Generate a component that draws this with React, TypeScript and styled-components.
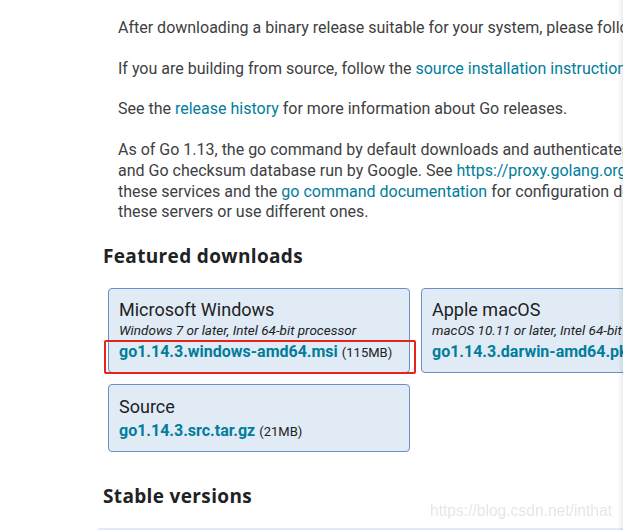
import React from "react";
import styled, { createGlobalStyle } from "styled-components";

const GlobalStyle = createGlobalStyle`
  html, body {
    margin: 0;
    padding: 0;
    background: #fff;
    overflow: hidden;
    height: 530px;
  }
  body {
    font-family: Roboto, "Liberation Sans", Arial, sans-serif;
    color: #3e4042;
  }
`;

const Page = styled.main`
  padding: 18px 0 0 103px;
  width: 900px;
`;

const Para = styled.p`
  margin: 0 0 20px 15px;
  font-size: 16px;
  line-height: 20.7px;
  white-space: nowrap;
`;

const Link = styled.a`
  color: #007d9c;
  text-decoration: none;
`;

const Heading = styled.h2<{ $top?: number }>`
  margin: ${({ $top }) => $top ?? 0}px 0 0 0;
  font-family: "Open Sans", "DejaVu Sans", sans-serif;
  font-weight: 700;
  font-size: 19px;
  line-height: 24px;
  color: #202224;
  letter-spacing: 0.35px;
`;

const CardGrid = styled.div`
  position: relative;
  margin: 20px 0 0 5px;
  display: grid;
  grid-template-columns: 302px 302px;
  column-gap: 11px;
  row-gap: 11px;
  align-items: start;
`;

const Card = styled.div<{ $padTop?: number }>`
  background: #e0ebf5;
  border: 1px solid #6b8fc4;
  border-radius: 4px;
  padding: ${({ $padTop }) => $padTop ?? 10}px 10px 8px 10px;
  white-space: nowrap;
  overflow: hidden;
`;

const CardTitle = styled.div`
  font-size: 18px;
  line-height: 22px;
  color: #202224;
`;

const CardSub = styled.div`
  font-size: 13.5px;
  line-height: 17px;
  font-style: italic;
  color: #202224;
  margin-top: 1px;
`;

const FileRow = styled.div<{ $top?: number }>`
  font-size: 13px;
  line-height: 22px;
  color: #202224;
  margin-top: ${({ $top }) => $top ?? 0}px;
`;

const FileLink = styled(Link)`
  font-size: 16px;
  font-weight: 700;
  margin-right: 4px;
`;

const Highlight = styled.div`
  position: absolute;
  left: -4px;
  top: 52px;
  width: 308px;
  height: 30px;
  border: 2px solid #e5241b;
  border-radius: 2px;
  pointer-events: none;
`;

const TableStart = styled.div`
  margin: 20px 0 0 -5px;
  height: 30px;
  background: #e0ebf5;
`;

const Watermark = styled.div`
  position: fixed;
  left: 430px;
  top: 502px;
  font-family: "Liberation Sans", Arial, sans-serif;
  font-size: 15.6px;
  color: rgba(222, 222, 222, 0.75);
`;

const EdgeShade = styled.div`
  position: fixed;
  top: 0;
  right: 0;
  width: 5px;
  height: 530px;
  background: linear-gradient(to right, rgba(0, 0, 0, 0), rgba(0, 0, 0, 0.07));
`;

export default function App() {
  return (
    <>
      <GlobalStyle />
      <Page>
        <Para>
          After downloading a binary release suitable for your system, please follow the{" "}
          <Link href="#">installation instructions</Link>.
        </Para>
        <Para>
          If you are building from source, follow the{" "}
          <Link href="#">source installation instructions</Link>.
        </Para>
        <Para>
          See the <Link href="#">release history</Link> for more information about Go releases.
        </Para>
        <Para>
          As of Go 1.13, the go command by default downloads and authenticates modules using the Go module mirror
          <br />
          and Go checksum database run by Google. See{" "}
          <Link href="#">https://proxy.golang.org/privacy</Link> for privacy information about
          <br />
          these services and the <Link href="#">go command documentation</Link> for configuration details including how to disable the use of
          <br />
          these servers or use different ones.
        </Para>

        <Heading $top={21}>Featured downloads</Heading>

        <CardGrid>
          <Card>
            <CardTitle>Microsoft Windows</CardTitle>
            <CardSub>Windows 7 or later, Intel 64-bit processor</CardSub>
            <FileRow $top={2}>
              <FileLink href="#">go1.14.3.windows-amd64.msi</FileLink>(115MB)
            </FileRow>
          </Card>
          <Card>
            <CardTitle>Apple macOS</CardTitle>
            <CardSub>macOS 10.11 or later, Intel 64-bit processor</CardSub>
            <FileRow $top={2}>
              <FileLink href="#">go1.14.3.darwin-amd64.pkg</FileLink>(120MB)
            </FileRow>
          </Card>
          <Card $padTop={11}>
            <CardTitle>Source</CardTitle>
            <FileRow $top={2}>
              <FileLink href="#">go1.14.3.src.tar.gz</FileLink>(21MB)
            </FileRow>
          </Card>
          <Highlight />
        </CardGrid>

        <Heading $top={32}>Stable versions</Heading>
        <TableStart />
      </Page>
      <Watermark>https://blog.csdn.net/inthat</Watermark>
      <EdgeShade />
    </>
  );
}
